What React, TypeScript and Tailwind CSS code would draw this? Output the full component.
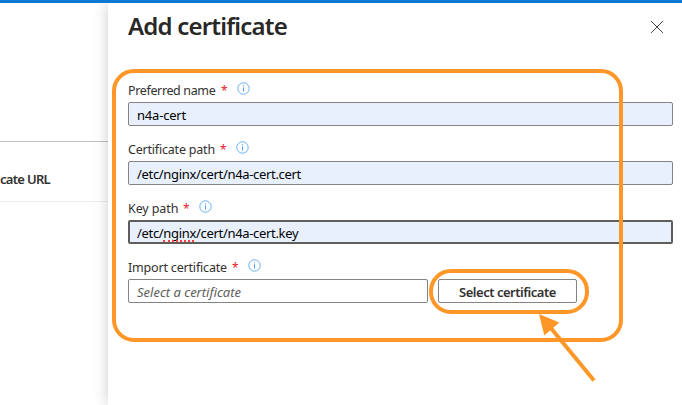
import type { ReactNode } from "react";

function InfoIcon() {
  return (
    <svg className="h-[13px] w-[13px] shrink-0" viewBox="0 0 13 13" fill="none">
      <circle cx="6.5" cy="6.5" r="5.7" stroke="#69aff5" strokeWidth="1" />
      <path d="M6.5 5.4v4" stroke="#4a9bf0" strokeWidth="1" />
      <circle cx="6.5" cy="3.8" r="0.65" fill="#4a9bf0" />
    </svg>
  );
}

interface FieldProps {
  label: string;
  labelClass: string;
  children: ReactNode;
}

function Field({ label, labelClass, children }: FieldProps) {
  return (
    <div className="flex flex-col">
      <div className="flex h-5 items-start">
        <span className={`${labelClass} text-[12.5px] leading-[18px] whitespace-nowrap text-[#323130]`}>
          {label}
        </span>
        <span className="ml-[5px] w-[6px] text-[12px] leading-[18px] text-[#e8202a]">*</span>
        <span className="ml-[9.5px]">
          <InfoIcon />
        </span>
      </div>
      {children}
    </div>
  );
}

const inputBase =
  "flex h-6 items-center rounded-[2px] pt-px text-[13px] leading-[18px] whitespace-nowrap";

export default function App() {
  return (
    <div className="relative flex h-[405px] w-[682px] flex-col overflow-hidden bg-white font-['Noto_Sans',sans-serif]">
      <div className="z-10 h-[3px] shrink-0 bg-[#0f78d4]" />
      <div className="flex flex-1">
        <div className="flex w-[108px] shrink-0 flex-col overflow-hidden">
          <div className="h-[139px] border-b border-[#c0c0c0]" />
          <div className="flex h-[60px] items-start border-b border-[#ececec] pt-[28px]">
            <span className="text-[13px] leading-[18px] font-semibold tracking-[-0.7px] whitespace-nowrap text-[#323130]">
              cate URL
            </span>
          </div>
        </div>
        <main className="flex flex-1 flex-col bg-white pr-[9px] pl-5 shadow-[0_0_14px_rgba(0,0,0,0.2)]">
          <header className="flex h-[79px] items-start justify-between pt-[6px]">
            <h1 className="text-[24px] leading-[34px] font-semibold tracking-[-0.8px] whitespace-nowrap text-[#292827]">
              Add certificate
            </h1>
            <svg className="mt-3 mr-[10px] h-3 w-3" viewBox="0 0 12 12">
              <path d="M0 0L12 12M12 0L0 12" stroke="#494847" strokeWidth="1" />
            </svg>
          </header>
          <div className="flex flex-col gap-[15px]">
            <Field label="Preferred name" labelClass="w-[88px] tracking-[-0.36px]">
              <div className={`${inputBase} border border-[#858483] bg-[#e8f0fe] pl-2 tracking-[-0.2px] text-black`}>
                n4a-cert
              </div>
            </Field>
            <Field label="Certificate path" labelClass="w-[87px] tracking-[-0.2px]">
              <div className={`${inputBase} border border-[#858483] bg-[#e8f0fe] pl-2 tracking-[-0.32px] text-black`}>
                /etc/nginx/cert/n4a-cert.cert
              </div>
            </Field>
            <Field label="Key path" labelClass="w-[50px] tracking-[-0.1px]">
              <div className={`${inputBase} border-2 border-[#605e5c] bg-[#e8f0fe] pl-[7px] tracking-[-0.32px] text-black`}>
                /etc/
                <span className="relative">
                  nginx
                  <span className="absolute right-[2px] bottom-0 left-0 border-b-2 border-dotted border-[#ff4040]" />
                </span>
                /cert/n4a-cert.key
              </div>
            </Field>
            <Field label="Import certificate" labelClass="w-[99px] tracking-[-0.18px]">
              <div className="flex gap-[10px]">
                <div className={`${inputBase} w-[300px] border border-[#858483] bg-white pl-2 text-[#605e5c] italic`}>
                  Select a certificate
                </div>
                <button className="flex h-6 w-[139px] items-center justify-center rounded-[2px] border border-[#858483] bg-white pt-px text-[13px] leading-[18px] font-semibold tracking-[-0.48px] whitespace-nowrap text-[#323130]">
                  Select certificate
                </button>
              </div>
            </Field>
          </div>
        </main>
      </div>
      <div className="absolute top-[69px] left-[112px] h-[273px] w-[511px] rounded-[22px] border-4 border-[#ff9728]" />
      <div className="absolute top-[269px] left-[429px] h-[45px] w-[160px] rounded-[22px] border-4 border-[#ff9728]" />
      <svg className="absolute top-[310px] left-[530px] h-[75px] w-[75px]" viewBox="530 310 75 75">
        <path d="M594 380.5L550 327" stroke="#ff9728" strokeWidth="4" />
        <path d="M539 314L559.3 322.5L544.3 335.5Z" fill="#ff9728" />
      </svg>
    </div>
  );
}
